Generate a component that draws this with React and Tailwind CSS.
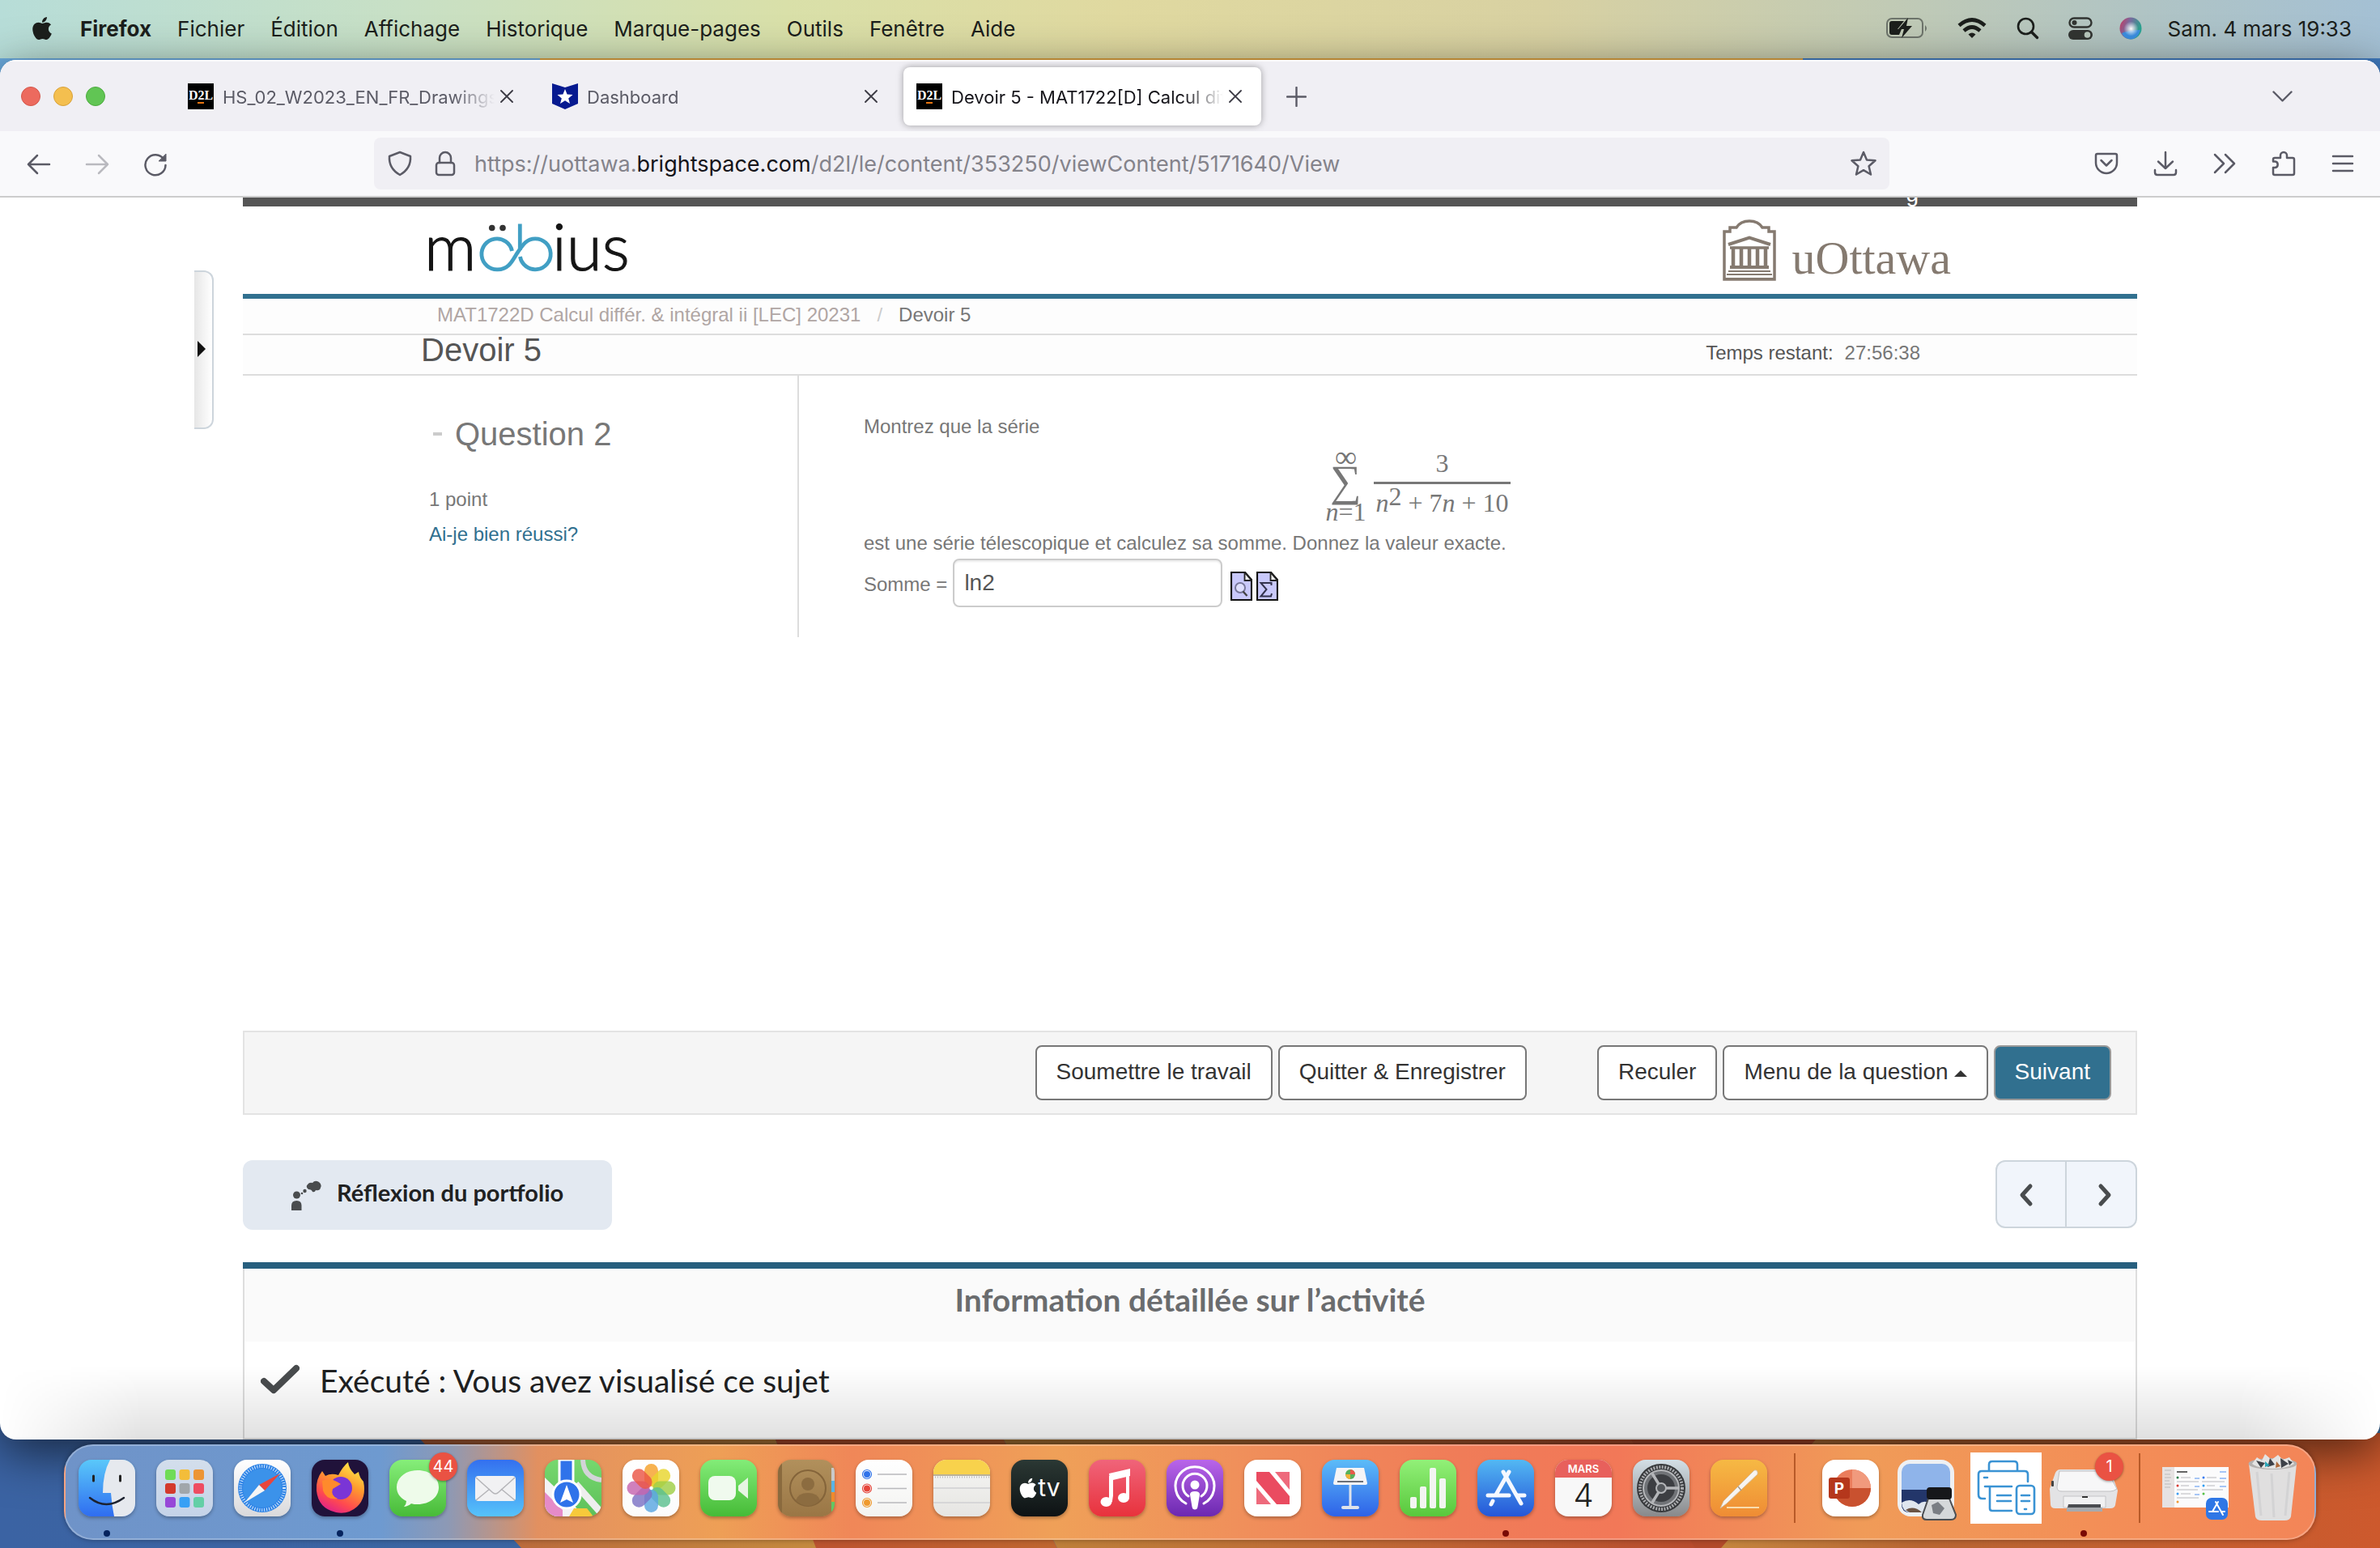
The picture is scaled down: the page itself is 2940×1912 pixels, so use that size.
import { useState } from "react"
import { FaApple } from "react-icons/fa"

const menus = ["Fichier", "Édition", "Affichage", "Historique", "Marque-pages", "Outils", "Fenêtre", "Aide"]

const Wallpaper = () => (
  <svg className="absolute inset-0 w-full h-full" viewBox="0 0 2940 1912" preserveAspectRatio="none" aria-hidden="true">
    <defs>
      <linearGradient id="wpBlue">
        <stop offset="0" stopColor="#3b63a3" />
        <stop offset="1" stopColor="#3d6d9e" />
      </linearGradient>
      <linearGradient id="wpA">
        <stop offset="0" stopColor="#b8603a" />
        <stop offset="1" stopColor="#c48a3e" />
      </linearGradient>
      <linearGradient id="wpB">
        <stop offset="0" stopColor="#bb5030" />
        <stop offset="1" stopColor="#bf6630" />
      </linearGradient>
      <linearGradient id="wpC">
        <stop offset="0" stopColor="#bd833a" />
        <stop offset="0.5" stopColor="#bf6534" />
        <stop offset="1" stopColor="#b4402a" />
      </linearGradient>
      <linearGradient id="wpD">
        <stop offset="0" stopColor="#c4853e" />
        <stop offset="0.3" stopColor="#b86532" />
        <stop offset="1" stopColor="#cd592d" />
      </linearGradient>
    </defs>
    <rect width="2940" height="1912" fill="url(#wpBlue)" />
    <rect width="667" height="110" fill="#6aa9dc" />
    <rect x="667" width="1560" height="110" fill="#dba13f" />
    <rect x="2227" width="713" height="110" fill="#3f79bd" />
    <path d="M512 1770 L644 1912 H1010 L955 1770z" fill="url(#wpA)" />
    <path d="M955 1770 L1008 1912 H1306 L1236 1770z" fill="url(#wpB)" />
    <path d="M1236 1770 L1306 1912 H2126 L2250 1770z" fill="url(#wpC)" />
    <path d="M2010 1770 L2094 1912 H2130 L2250 1770z" fill="#b24a2b" />
    <path d="M2250 1770 L2126 1912 H2940 V1770z" fill="url(#wpD)" />
  </svg>
)

const MenuBar = () => (
  <header className="relative h-[72px] shrink-0 flex items-center pl-[38px] pr-[33px] pb-[2px] text-[26px] text-[#1c1f1c] bg-[linear-gradient(90deg,#b7ddd8_0%,#c8e0c5_17%,#d9e0a9_33%,#e0d9a0_47%,#d8d1a2_65%,#c3cbb3_78%,#b0c4c4_90%,#a4c0d4_100%)]">
    <FaApple className="w-7 h-8 mr-[33px]" />
    <nav className="flex gap-8">
      <button type="button" className="font-bold">Firefox</button>
      {menus.map((m) => (
        <button type="button" key={m}>{m}</button>
      ))}
    </nav>
    <div className="ml-auto flex items-center">
      <svg width="52" height="26" viewBox="0 0 52 26" className="mr-[36px]">
        <rect x="1" y="1" width="44" height="23" rx="6" fill="none" stroke="#6d746b" strokeWidth="2" />
        <path d="M48 9 q4 4 0 8z" fill="#6d746b" />
        <path d="M7 4 H22 L14 14 H19 L16 21 H7 Q4 21 4 18 V7 Q4 4 7 4z" fill="#1c1f1c" />
        <path d="M27 0 L15 14 H22 L19 25 L32 10 H25z" fill="#1c1f1c" />
      </svg>
      <svg width="36" height="26" viewBox="0 0 36 26" className="mr-[37px]" fill="none" stroke="#1c1f1c" strokeWidth="4.6">
        <path d="M2 9.500 Q18 -4.500 34 9.500" />
        <path d="M8 16 Q18 7 28 16" />
        <path d="M18 25 L13.500 20.500 Q18 16.500 22.500 20.500z" fill="#1c1f1c" stroke="none" />
      </svg>
      <svg width="28" height="28" viewBox="0 0 28 28" className="mr-[36px]" fill="none" stroke="#1c1f1c" strokeLinecap="round">
        <circle cx="11.500" cy="11.500" r="9.500" strokeWidth="2.600" />
        <path d="M18.500 18.500 L25.500 25.500" strokeWidth="3.400" />
      </svg>
      <svg width="30" height="28" viewBox="0 0 30 28" className="mr-[33px]">
        <rect x="1.500" y="1.500" width="27" height="11" rx="5.500" fill="none" stroke="#323532" strokeWidth="2.400" />
        <circle cx="7.500" cy="7" r="3" fill="#323532" />
        <rect x="0" y="16" width="30" height="12" rx="6" fill="#323532" />
        <circle cx="23.500" cy="22" r="3.800" fill="#b9c8bd" />
      </svg>
      <svg width="28" height="28" viewBox="0 0 28 28" className="mr-8">
        <defs>
          <linearGradient id="siri" x1="0" y1="0" x2="1" y2="0.400">
            <stop offset="0" stopColor="#d1355c" />
            <stop offset="0.450" stopColor="#7a6a9e" />
            <stop offset="1" stopColor="#27a58f" />
          </linearGradient>
          <radialGradient id="siriGlow">
            <stop offset="0" stopColor="#fff" />
            <stop offset="1" stopColor="#fff" stopOpacity="0" />
          </radialGradient>
        </defs>
        <circle cx="14" cy="14" r="13.500" fill="url(#siri)" />
        <path d="M3 20 Q13 16 26 16 Q23 27 14 27.500 Q6 27 3 20z" fill="#3b8ee0" />
        <circle cx="14.500" cy="14.500" r="9" fill="url(#siriGlow)" />
      </svg>
      <span className="pr-[2px]">Sam. 4 mars 19:33</span>
    </div>
  </header>
)

const D2L = () => (
  <span className="w-8 h-8 shrink-0 bg-black text-white flex flex-col items-center justify-center font-['Liberation_Serif',serif] font-bold text-[16px] leading-4">
    D2L
    <span className="w-2 h-[2px] bg-[#e87511]"></span>
  </span>
)

const Shield = () => (
  <svg width="32" height="32" viewBox="0 0 32 32" className="shrink-0">
    <path d="M0 0 L16 5 L32 0 V25 L16 32 L0 25z" fill="#071a90" />
    <path d="M16 7 L18.600 13.600 L25.500 14 L20.200 18.400 L22 25 L16 21.300 L10 25 L11.800 18.400 L6.500 14 L13.400 13.600z" fill="#fff" />
  </svg>
)

const Tab = ({ icon, title, active }) => (
  <div className={active ? "w-[442px] h-[72px] px-4 flex items-center rounded-lg bg-white text-[#15141a] shadow-[0_0_8px_rgba(0,0,0,0.35)]" : "w-[442px] h-[72px] px-4 flex items-center rounded-lg text-[#5b5b66]"}>
    {icon}
    <span className="ml-[11px] pt-[3px] flex-1 overflow-hidden whitespace-nowrap text-[22px] [mask-image:linear-gradient(to_right,black_calc(100%-50px),transparent)]">
      {title}
    </span>
    <button type="button" aria-label="Fermer l’onglet" className="ml-[7px] mr-2 w-4 h-4">
      <svg width="16" height="16" viewBox="0 0 16 16" stroke="#3b3a44" strokeWidth="1.800" strokeLinecap="round">
        <path d="M1 1 L15 15 M15 1 L1 15" />
      </svg>
    </button>
  </div>
)

const TabStrip = () => (
  <div className="h-[88px] shrink-0 bg-[#f0eff4] border-t-2 border-white/70 flex items-center pl-[26px] pr-[108px]">
    <div className="flex gap-4 mr-[86px]">
      <span className="w-6 h-6 rounded-full bg-[#ec6a5e] border border-[#d4574b]"></span>
      <span className="w-6 h-6 rounded-full bg-[#f4bf4f] border border-[#d8a13a]"></span>
      <span className="w-6 h-6 rounded-full bg-[#61c554] border border-[#4dab3f]"></span>
    </div>
    <div className="flex gap-2">
      <Tab icon={<D2L />} title="HS_02_W2023_EN_FR_Drawings" />
      <Tab icon={<Shield />} title="Dashboard" />
      <Tab icon={<D2L />} title="Devoir 5 - MAT1722[D] Calcul différ" active />
    </div>
    <button type="button" aria-label="Nouvel onglet" className="ml-[31px]">
      <svg width="25" height="25" viewBox="0 0 25 25" stroke="#5b5b66" strokeWidth="2.400" strokeLinecap="round">
        <path d="M12.500 1 V24 M1 12.500 H24" />
      </svg>
    </button>
    <button type="button" aria-label="Lister les onglets" className="ml-auto">
      <svg width="25" height="14" viewBox="0 0 25 14" fill="none" stroke="#5b5b66" strokeWidth="2.400" strokeLinecap="round" strokeLinejoin="round">
        <path d="M1.500 1.500 L12.500 12.500 L23.500 1.500" />
      </svg>
    </button>
  </div>
)

const NavIcon = ({ label, children, faded }) => (
  <button type="button" aria-label={label} className={faded ? "w-8 h-8 opacity-40" : "w-8 h-8"}>
    <svg width="32" height="32" viewBox="0 0 32 32" fill="none" stroke="#5b5b66" strokeWidth="2.500" strokeLinecap="round" strokeLinejoin="round">
      {children}
    </svg>
  </button>
)

const NavBar = () => (
  <div className="h-[82px] shrink-0 bg-[#f9f9fb] border-b-2 border-[#cccccc] flex items-center pl-8 pr-[30px]">
    <div className="flex gap-10 mr-[254px]">
      <NavIcon label="Reculer d’une page"><path d="M29 17 H3 M14 6 L3 17 L14 28" /></NavIcon>
      <NavIcon label="Avancer d’une page" faded><path d="M3 17 H29 M18 6 L29 17 L18 28" /></NavIcon>
      <NavIcon label="Actualiser">
        <path d="M26.500 11 A12.500 12.500 0 1 0 28.500 18" />
        <path d="M29 4.500 V13 H20.500z" fill="#5b5b66" strokeWidth="1" />
      </NavIcon>
    </div>
    <div className="flex-1 h-16 rounded-lg bg-[#f0eff4] flex items-center gap-6 px-4">
      <NavIcon label="Protection">
        <path d="M16 2 L29 7 Q30 22 16 30 Q2 22 3 7z" />
      </NavIcon>
      <NavIcon label="Sécurité">
        <rect x="5" y="15" width="22" height="15" rx="3" />
        <path d="M9 15 V9 A7 7 0 0 1 23 9 V15" />
      </NavIcon>
      <div className="flex-1 pt-[2px] text-[27px] text-[#84838b] whitespace-nowrap -ml-1">
        https://uottawa.<span className="text-[#15141a]">brightspace.com</span>/d2l/le/content/353250/viewContent/5171640/View
      </div>
      <NavIcon label="Marquer cette page">
        <path d="M16 2 L20 11.500 L30.500 12.300 L22.600 19.300 L25 29.500 L16 24.200 L7 29.500 L9.400 19.300 L1.500 12.300 L12 11.500z" />
      </NavIcon>
    </div>
    <div className="flex gap-[41px] ml-[252px]">
      <NavIcon label="Pocket">
        <path d="M5 4 H27 Q29 4 29 6 V15 A13 13 0 0 1 3 15 V6 Q3 4 5 4z M9.500 12 L16 18.500 L22.500 12" />
      </NavIcon>
      <NavIcon label="Téléchargements">
        <path d="M16 2 V22 M7 13.500 L16 22 L25 13.500 M3 24 V27 Q3 30 6 30 H26 Q29 30 29 27 V24" />
      </NavIcon>
      <NavIcon label="Autres outils">
        <path d="M4 5 L15 16 L4 27 M17 5 L28 16 L17 27" />
      </NavIcon>
      <NavIcon label="Extensions">
        <path d="M5 30 Q3 30 3 28 V21 H5.500 A3.800 3.800 0 0 0 5.500 13.500 H3 V11 Q3 9 5 9 H12 V6 A4 4 0 0 1 20 6 V9 H27 Q29 9 29 11 V28 Q29 30 27 30z" />
      </NavIcon>
      <NavIcon label="Menu">
        <path d="M4 7 H28 M4 16 H28 M4 25 H28" />
      </NavIcon>
    </div>
  </div>
)

const Mobius = () => (
  <svg width="250" height="72" viewBox="0 0 250 72" className="font-['Lato',sans-serif] font-light" role="img" aria-label="möbius">
    <text x="-5" y="61" fontSize="80" fill="#151515" stroke="#151515" strokeWidth="1.200">m</text>
    <g fill="none" stroke="#419fc4" strokeWidth="4.800">
      <path d="M103.500 37 A19 19 0 1 0 86 59.800 C101 59.800 105 46 111 38 C117 29 122 21.800 132 21.800 A19 19 0 1 1 113.500 44" />
      <path d="M113.300 3.500 V36" />
    </g>
    <circle cx="78.700" cy="8.500" r="3.800" fill="#333" />
    <circle cx="92" cy="8.500" r="3.800" fill="#333" />
    <text x="153" y="61" fontSize="80" fill="#151515" stroke="#151515" strokeWidth="1.200">ius</text>
  </svg>
)

const UOttawa = () => (
  <div className="flex items-center gap-5 text-[#857a70]">
    <svg width="66" height="76" viewBox="0 0 66 76" fill="none" stroke="currentColor">
      <path d="M2 74 V15 H9 V10 H17 Q22 2 33 2 Q44 2 49 10 H57 V15 H64 V74z" strokeWidth="3.500" />
      <path d="M7 31 L33 22.500 L59 31" strokeWidth="4" />
      <path d="M9 35 H57" strokeWidth="3.500" />
      <path d="M13 35 V58 M23 35 V58 M33 35 V58 M43 35 V58 M53 35 V58" strokeWidth="4.500" />
      <path d="M9 59 H57" strokeWidth="4" />
      <path d="M7 64 H59 M5 68 H61 M2 73 H64" strokeWidth="2" />
    </svg>
    <span className="font-['Liberation_Serif',serif] text-[58px] leading-[60px] pt-5">uOttawa</span>
  </div>
)

const Formula = () => (
  <div className="h-[110px] flex justify-center items-center gap-[10px] font-['Liberation_Serif',serif] text-[32px] text-[#777]">
    <div className="flex flex-col items-center">
      <span className="h-[20px] leading-[20px] text-[38px]">∞</span>
      <span className="h-[44px] leading-[40px] text-[54px]">∑</span>
      <span className="h-[26px] leading-[28px]"><i>n</i>=1</span>
    </div>
    <div className="flex flex-col items-center">
      <span className="leading-[36px] pb-[5px]">3</span>
      <span className="w-full h-[3px] bg-[#777]"></span>
      <span className="leading-[46px] px-[2px] whitespace-nowrap">
        <i>n</i><sup className="text-[32px] leading-[0px] top-[-8px]">2</sup> + 7<i>n</i> + 10
      </span>
    </div>
  </div>
)

const DocIcon = ({ children, label }) => (
  <button type="button" aria-label={label}>
    <svg width="27" height="36" viewBox="0 0 27 36">
      <path d="M1 1 H18 L26 10 V35 H1z" fill="#c9c9fb" stroke="#111" strokeWidth="2.200" />
      <path d="M17.500 1 V11 H26z" fill="#eee" stroke="#222" strokeWidth="1.800" />
      {children}
    </svg>
  </button>
)

const Question = () => {
  const [answer, setAnswer] = useState("ln2")
  return (
    <section className="flex-1 flex items-start text-2xl text-[#777]">
      <div className="w-[687px] h-[323px] shrink-0 border-r-2 border-[#dddddd] pl-[230px] pt-[52px]">
        <h2 className="flex items-center text-[40px] leading-10">
          <span className="w-[11px] h-1 ml-[5px] mr-4 bg-[#cccccc]"></span>
          Question 2
        </h2>
        <p className="mt-[39px] leading-[43px]">1 point</p>
        <a href="#reussi" className="block leading-[43px] text-[#31708f]">Ai-je bien réussi?</a>
      </div>
      <div className="flex-1 pl-[80px] pr-[204px] pt-[46px]">
        <p className="leading-[34px]">Montrez que la série</p>
        <Formula />
        <p className="leading-[34px]">est une série télescopique et calculez sa somme. Donnez la valeur exacte.</p>
        <div className="mt-[2px] flex items-center">
          <label htmlFor="somme" className="pt-[3px]">Somme =</label>
          <input
            id="somme"
            className="ml-[7px] w-[333px] h-[60px] px-3 border-2 border-[#cccccc] rounded-lg bg-white text-[28px] text-[#555] shadow-[inset_0_2px_2px_rgba(0,0,0,0.08)]"
            value={answer}
            onChange={(e) => setAnswer(e.target.value)}
          />
          <div className="flex gap-[5px] ml-[10px] pt-2">
            <DocIcon label="Aperçu">
              <circle cx="12" cy="20" r="6" fill="#dfe0ff" stroke="#77779a" strokeWidth="2" />
              <path d="M15.500 24.500 L20.500 30" stroke="#444" strokeWidth="2.400" />
            </DocIcon>
            <DocIcon label="Éditeur d’équation">
              <path d="M18.500 17 V14 H5.500 L12.500 22 L5.500 30.500 H18 L19 27" fill="none" stroke="#33334d" strokeWidth="2" />
            </DocIcon>
          </div>
        </div>
      </div>
    </section>
  )
}

const ActionButton = ({ children, primary }) => (
  <button
    type="button"
    className={
      primary
        ? "h-[68px] px-6 pb-[3px] border-2 border-[#999] rounded-lg bg-[#31708f] text-white"
        : "h-[68px] px-6 pb-[3px] border-2 border-[#777] rounded-lg bg-white text-[#333] flex items-center gap-[7px]"
    }
  >
    {children}
  </button>
)

const Assignment = () => (
  <div className="flex-1 flex flex-col font-['Liberation_Sans',Arial,sans-serif]">
    <div className="h-[11px] bg-[#555555] text-white text-[28px] overflow-hidden flex justify-end items-end pr-[270px] pb-[7px]">
      <span className="leading-[16px]">g</span>
    </div>
    <div className="h-[114px] border-b-6 border-[#31708f] flex justify-between items-center pl-[229px] pr-[230px]">
      <Mobius />
      <UOttawa />
    </div>
    <div className="h-[45px] pb-1 bg-[#fdfdfd] border-b-2 border-[#dddddd] flex items-center pl-[240px] text-2xl">
      <a href="#cours" className="text-[#b0a6a4]">MAT1722D Calcul différ. &amp; intégral ii [LEC] 20231</a>
      <span className="mx-[20px] text-[#cccccc]">/</span>
      <span className="text-[#777]">Devoir 5</span>
    </div>
    <div className="h-[50px] bg-[#fdfdfd] border-b-2 border-[#dddddd] flex items-center justify-between pl-[220px] pr-[268px] text-[#555]">
      <h1 className="text-[40px] leading-9 pb-3">Devoir 5</h1>
      <p className="text-2xl pb-1">
        Temps restant:<span className="ml-[14px] text-[#777]">27:56:38</span>
      </p>
    </div>
    <Question />
    <div className="h-[104px] bg-[#f5f5f5] border-2 border-[#e3e3e3] flex items-center justify-end gap-[7px] pr-[30px] text-[28px]">
      <ActionButton>Soumettre le travail</ActionButton>
      <ActionButton>Quitter &amp; Enregistrer</ActionButton>
      <span className="w-[73px]"></span>
      <ActionButton>Reculer</ActionButton>
      <ActionButton>
        Menu de la question
        <svg width="16" height="8" viewBox="0 0 16 8" className="mt-1"><path d="M0 8 L8 0 L16 8z" fill="#333" /></svg>
      </ActionButton>
      <ActionButton primary>Suivant</ActionButton>
    </div>
  </div>
)

const PageButtons = () => (
  <div className="mt-14 mb-10 flex justify-between">
    <button type="button" className="h-[86px] px-[60px] pb-[6px] rounded-xl bg-[#e3e9f1] flex items-center gap-[19px] font-bold text-[29px] text-[#202122]">
      <svg width="37" height="38" viewBox="0 0 37 38" fill="#494c4e" className="mt-[8px]">
        <circle cx="6.500" cy="18" r="4.500" />
        <path d="M0 37 V31 Q0 25 6.500 25 Q12.500 25 12.500 31 V37z" />
        <circle cx="13" cy="16" r="1.300" />
        <circle cx="16.500" cy="13" r="2.200" />
        <path d="M21 11 Q17 8 20 5 Q22 2 26 3 Q29 -1 34 2 Q38 5 36 9 Q35 13 30 12 Q29 15 26 14 Q25 11 21 11z" />
      </svg>
      Réflexion du portfolio
    </button>
    <div className="h-[84px] flex rounded-xl border-2 border-[#cdd5dc] bg-[#f1f5fb] divide-x-2 divide-[#cdd5dc]">
      <button type="button" aria-label="Précédent" className="w-[86px] flex items-center justify-center pt-[2px] pr-[12px]">
        <svg width="18" height="30" viewBox="0 0 18 30" fill="none" stroke="#494c4e" strokeWidth="5" strokeLinecap="round" strokeLinejoin="round">
          <path d="M14 4 L4 15 L14 26" />
        </svg>
      </button>
      <button type="button" aria-label="Suivant" className="w-[85px] flex items-center justify-center pt-[2px] pl-[8px]">
        <svg width="18" height="30" viewBox="0 0 18 30" fill="none" stroke="#494c4e" strokeWidth="5" strokeLinecap="round" strokeLinejoin="round">
          <path d="M4 4 L14 15 L4 26" />
        </svg>
      </button>
    </div>
  </div>
)

const Activity = () => (
  <section className="border-t-8 border-[#275f7e]">
    <div className="border-x-2 border-b-2 border-[#dddddd]">
      <h2 className="h-[90px] pb-[14px] bg-[#fafafa] flex items-center justify-center text-[39px] font-bold text-[#6a6c6e]">
        Information détaillée sur l’activité
      </h2>
      <p className="h-[119px] pt-[28px] pl-5 flex items-start gap-[25px] text-[39px] leading-10 text-[#202122]">
        <svg width="48" height="38" viewBox="0 0 48 38" fill="none" stroke="#494c4e" strokeWidth="8" strokeLinecap="round" strokeLinejoin="round">
          <path d="M4 21 L16 32 L44 5" />
        </svg>
        Exécuté : Vous avez visualisé ce sujet
      </p>
    </div>
  </section>
)

const Browser = () => (
  <div className="relative mt-[2px] flex-1 flex flex-col rounded-[20px] overflow-hidden bg-white shadow-[0_16px_60px_rgba(0,0,0,0.6)]">
    <TabStrip />
    <NavBar />
    <main className="flex-1 flex font-['Lato',sans-serif]">
      <aside className="w-[300px] pt-[90px] pl-[240px]">
        <button type="button" aria-label="Ouvrir le panneau" className="w-6 h-[196px] pl-1 pb-[3px] flex items-center border-2 border-l-0 border-[#cdd5dc] rounded-r-xl bg-[linear-gradient(90deg,#e6e6e6,#ffffff)]">
          <svg width="10" height="20" viewBox="0 0 10 20"><path d="M0 0 L10 10 L0 20z" fill="#111" /></svg>
        </button>
      </aside>
      <div className="flex-1 flex flex-col mr-[300px]">
        <Assignment />
        <PageButtons />
        <Activity />
      </div>
    </main>
    <div className="absolute inset-x-0 bottom-0 h-[90px] bg-[linear-gradient(180deg,transparent,rgba(0,0,0,0.12))] pointer-events-none [mask-image:linear-gradient(90deg,transparent_0,black_6%,black_94%,transparent)]"></div>
  </div>
)

/* ---- dock ---- */

const Grad = ({ id, from, to }) => (
  <linearGradient id={id} x1="0" y1="0" x2="0" y2="1">
    <stop offset="0" stopColor={from} />
    <stop offset="1" stopColor={to} />
  </linearGradient>
)

const Tile = ({ id, from, to, children }) => (
  <svg width="70" height="70" viewBox="0 0 70 70" className="rounded-2xl shadow-[0_2px_4px_rgba(0,0,0,0.3)]">
    <defs><Grad id={id} from={from} to={to} /></defs>
    <rect width="70" height="70" fill={`url(#${id})`} />
    {children}
  </svg>
)

const Finder = () => (
  <Tile id="gFinder" from="#5ac8fa" to="#2f6df0">
    <path d="M39 0 H70 V70 H44 Q41 56 40 41 H30 Q30 16 39 0z" fill="#e6e9ee" />
    <path d="M18.500 20 V26 M51.500 20 V26" stroke="#222" strokeWidth="3" strokeLinecap="round" />
    <path d="M14 47 Q34 63 56 47" fill="none" stroke="#1c2230" strokeWidth="2.500" strokeLinecap="round" />
  </Tile>
)

const launchColors = ["#6fdc57", "#f3bd3a", "#ec9535", "#d33a2c", "#a0a6ab", "#ee4d62", "#9748d8", "#38a0f5", "#63cfa6"]

const Launchpad = () => (
  <Tile id="gLaunch" from="#d3deec" to="#c5d3e8">
    {launchColors.map((c, i) => (
      <rect key={c} x={11 + (i % 3) * 17.5} y={12 + Math.floor(i / 3) * 17} width="13" height="13" rx="3" fill={c} />
    ))}
  </Tile>
)

const Safari = () => (
  <Tile id="gSafari" from="#ffffff" to="#d9d9db">
    <circle cx="35" cy="35" r="30" fill="#2f84e6" />
    <circle cx="35" cy="35" r="27" fill="none" stroke="#cfe6ff" strokeWidth="4" strokeDasharray="1 2" />
    <circle cx="35" cy="35" r="24" fill="#3b92ea" />
    <path d="M57 17 L38 38 L31 31z" fill="#e8453c" />
    <path d="M13 53 L31 31 L38 38z" fill="#f5f5f5" />
  </Tile>
)

const Firefox = () => (
  <Tile id="gFirefox" from="#20123a" to="#20123a">
    <defs>
      <linearGradient id="fox" x1="0.8" y1="0" x2="0.3" y2="1">
        <stop offset="0" stopColor="#fff04a" />
        <stop offset="0.4" stopColor="#ff9a2e" />
        <stop offset="0.75" stopColor="#ff4a4f" />
        <stop offset="1" stopColor="#e0218a" />
      </linearGradient>
    </defs>
    <path d="M45 3 Q46 11 53 18 L58 15 Q59 22 64 27 Q68 47 56 58 Q45 68 30 65 Q8 60 6 38 Q5 24 13 14 L17 20 Q24 16 33 19 Q38 9 45 3z" fill="url(#fox)" />
    <circle cx="36" cy="35" r="14" fill="#7a35d6" />
    <path d="M13 26 Q23 22 31 27 L36 30 L26 36 Q23 44 32 48 Q18 50 14 38z" fill="#ff8a2c" />
  </Tile>
)

const Messages = () => (
  <Tile id="gMsg" from="#86ee7a" to="#48bb38">
    <path d="M35 13 C50 13 61 22 61 34 C61 46 50 55 35 55 C32 55 29 55 27 54 Q24 57 18 58 Q21 55 21 51 C13 47 9 41 9 34 C9 22 20 13 35 13z" fill="#eefbea" />
  </Tile>
)

const Mail = () => (
  <Tile id="gMail" from="#3470ef" to="#56c3fa">
    <rect x="10" y="20" width="50" height="31" rx="4" fill="#f1f1f3" />
    <path d="M11 22 L31 40 Q35 44 39 40 L59 22 M11 50 L28 36 M59 50 L42 36" fill="none" stroke="#b4b4b8" strokeWidth="1.5" />
  </Tile>
)

const Maps = () => (
  <Tile id="gMaps" from="#76d86e" to="#5dc05a">
    <path d="M0 22 L50 70 H0z" fill="#f3f3f5" />
    <path d="M0 40 L22 62 V70 H0z" fill="#e58bc8" />
    <path d="M30 70 L36 60 H52 L60 70z" fill="#f7c93b" />
    <path d="M18 0 V45 H35 V0z" fill="#2f73ea" stroke="#fff" strokeWidth="3" />
    <path d="M38 30 L70 66" stroke="#eee" strokeWidth="9" />
    <path d="M47 0 Q48 22 70 25" fill="none" stroke="#d2d4d8" strokeWidth="6" />
    <circle cx="27" cy="43" r="17" fill="#2f73ea" stroke="#fff" strokeWidth="3" />
    <path d="M27 31 L35 53 L27 49 L19 53z" fill="#fff" />
  </Tile>
)

const petals = ["#f5a12b", "#e8d62d", "#9fce46", "#5cbf8f", "#5aa6e0", "#7b72c4", "#c664ae", "#ea5545"]

const Photos = () => (
  <Tile id="gPhotos" from="#ffffff" to="#fbfbfb">
    {petals.map((c, i) => (
      <rect key={c} x="27" y="5" width="17" height="28" rx="8.500" fill={c} fillOpacity="0.82" transform={`rotate(${i * 45} 35.5 35)`} />
    ))}
  </Tile>
)

const FaceTime = () => (
  <Tile id="gFace" from="#83ec78" to="#46bb37">
    <rect x="10" y="20" width="34" height="30" rx="8" fill="#f0faee" />
    <path d="M47 32 L59 22 V48 L47 38z" fill="#e6f5e3" />
  </Tile>
)

const Contacts = () => (
  <Tile id="gContacts" from="#b1905c" to="#9a7645">
    <rect x="66" y="10" width="4" height="16" fill="#c9c9c9" />
    <rect x="66" y="26" width="4" height="14" fill="#58b4e6" />
    <rect x="66" y="40" width="4" height="12" fill="#f08a2c" />
    <rect x="66" y="52" width="4" height="12" fill="#62c763" />
    <rect width="5" height="70" fill="#8a6a3e" />
    <circle cx="37" cy="35" r="22" fill="none" stroke="#84643a" strokeWidth="2" />
    <circle cx="37" cy="30" r="8" fill="#8c6c40" />
    <path d="M22 50 Q25 41 37 41 Q49 41 52 50 Q45 57 37 57 Q29 57 22 50z" fill="#8c6c40" />
  </Tile>
)

const Reminders = () => (
  <Tile id="gRem" from="#ffffff" to="#f3f3f1">
    {["#2f73ea", "#e6453a", "#ef9a2e"].map((c, i) => (
      <g key={c}>
        <circle cx="14" cy={18 + i * 17.5} r="5.500" fill="none" stroke={c} strokeWidth="1.200" />
        <circle cx="14" cy={18 + i * 17.5} r="4" fill={c} />
        <path d={`M27 ${18 + i * 17.5} H63`} stroke="#b9b9bc" strokeWidth="1.600" />
      </g>
    ))}
  </Tile>
)

const Notes = () => (
  <Tile id="gNotes" from="#f6f6f4" to="#e6e5e2">
    <rect width="70" height="18" fill="#f8d24c" />
    <path d="M0 19 H70" stroke="#a79d7c" strokeWidth="1.500" />
    <path d="M2 21.500 H70" stroke="#bbb" strokeWidth="2" strokeDasharray="1 2" />
    <path d="M0 35 H70 M0 53 H70" stroke="#cfcfd2" strokeWidth="1.500" />
  </Tile>
)

const AppleTv = () => (
  <div className="w-[70px] h-[70px] rounded-2xl bg-[linear-gradient(180deg,#2b3834,#0d1214)] text-white flex items-center justify-center shadow-[0_2px_4px_rgba(0,0,0,0.3)]">
    <FaApple className="w-6 h-7" />
    <span className="text-[30px] leading-8 pb-[2px]">tv</span>
  </div>
)

const Music = () => (
  <Tile id="gMusic" from="#f0647a" to="#e8323c">
    <path d="M25 17 L51 11 V20 L30 25 V51" fill="#fff" />
    <path d="M27 52 V20 M48 46 V14" stroke="#fff" strokeWidth="4" />
    <ellipse cx="21.500" cy="52" rx="7" ry="6" fill="#fff" />
    <ellipse cx="43" cy="47" rx="7" ry="6" fill="#fff" />
  </Tile>
)

const Podcasts = () => (
  <Tile id="gPod" from="#b965ea" to="#6c28b0">
    <g fill="none" stroke="#fff" strokeWidth="3" strokeLinecap="round">
      <path d="M24 54 A24 24 0 1 1 46 54" />
      <path d="M27 45 A15 15 0 1 1 43 45" />
    </g>
    <circle cx="35" cy="31" r="5.500" fill="#fff" />
    <path d="M35 39 Q41 39 41 43 L38.500 58 Q38 61.500 35 61.500 Q32 61.500 31.500 58 L29 43 Q29 39 35 39z" fill="#fff" />
  </Tile>
)

const News = () => (
  <Tile id="gNews" from="#ffffff" to="#ffffff">
    <path d="M15 15 H31 L56 45 V55 H40 L15 26z" fill="#ea4b60" />
    <path d="M38 15 H56 V37z M15 34 V55 H33z" fill="#ee6a7c" />
  </Tile>
)

const Keynote = () => (
  <Tile id="gKey" from="#5cbcf8" to="#2e62e8">
    <path d="M18 10 H52 L56 29 Q56 31 54 31 H16 Q14 31 14 29z" fill="#f4f4f6" />
    <circle cx="35" cy="18" r="6" fill="#58b05a" />
    <path d="M35 18 V12 A6 6 0 0 1 41 18z" fill="#e85a4a" />
    <path d="M35 18 H29 A6 6 0 0 0 35 24z" fill="#f0b23a" />
    <path d="M19 27 H51" stroke="#6b7077" strokeWidth="2" />
    <path d="M35 31 V58" stroke="#dfe3ea" strokeWidth="3" />
    <rect x="24" y="57" width="22" height="4" rx="2" fill="#dfe3ea" />
  </Tile>
)

const Numbers = () => (
  <Tile id="gNum" from="#92f078" to="#58c83c">
    <rect x="13" y="46" width="8" height="14" rx="2" fill="#f2f5f1" />
    <rect x="25" y="33" width="8" height="27" rx="2" fill="#f2f5f1" />
    <rect x="37" y="10" width="8" height="50" rx="2" fill="#f2f5f1" />
    <rect x="49" y="23" width="8" height="37" rx="2" fill="#f2f5f1" />
  </Tile>
)

const AppStore = () => (
  <Tile id="gStore" from="#53b8f3" to="#2556d8">
    <g stroke="#f5f8ff" strokeWidth="5" strokeLinecap="round">
      <path d="M32 15 L54 54 M39 15 L23 43 M13 44 H39 M50 44 H58 M19 51 L17 55" />
    </g>
  </Tile>
)

const Calendar = () => (
  <div className="w-[70px] h-[70px] rounded-2xl overflow-hidden bg-[#f8f8f8] text-center shadow-[0_2px_4px_rgba(0,0,0,0.3)]">
    <div className="h-[22px] bg-[#e8605c] text-white text-[13px] leading-[23px] font-semibold">MARS</div>
    <div className="text-[40px] leading-[44px] font-light text-[#222]">4</div>
  </div>
)

const Settings = () => (
  <Tile id="gSet" from="#d3dfe6" to="#88898b">
    <circle cx="35" cy="35" r="30" fill="#36383b" />
    <circle cx="35" cy="35" r="26" fill="none" stroke="#a9abae" strokeWidth="4" strokeDasharray="2 1.500" />
    <circle cx="35" cy="35" r="22" fill="#707377" stroke="#b4b6b9" strokeWidth="2" />
    <circle cx="35" cy="35" r="17" fill="#3c3e42" />
    <path d="M35 35 H56 M35 35 L24 17 M35 35 L24 53" stroke="#b4b6b9" strokeWidth="3.500" />
    <circle cx="35" cy="35" r="6" fill="#55585c" stroke="#b4b6b9" strokeWidth="2" />
  </Tile>
)

const Pages = () => (
  <Tile id="gPages" from="#f6b944" to="#ef8c34">
    <path d="M54 13 Q59 12 58 18 L20 54 L12 60 L16 51z" fill="#f7f4f0" stroke="#cbb79b" strokeWidth="0.800" />
    <path d="M34 33 L38 38" stroke="#a59a8c" strokeWidth="1.500" />
    <path d="M20 59 H60" stroke="#f9dcae" strokeWidth="2" />
  </Tile>
)

const PowerPoint = () => (
  <Tile id="gPpt" from="#ffffff" to="#ffffff">
    <circle cx="37" cy="35" r="23" fill="#ea7d5c" />
    <path d="M37 35 H60 A23 23 0 0 1 14 35z" fill="#c9512f" />
    <path d="M37 12 A23 23 0 0 1 60 35 H37z" fill="#f19a7d" />
    <rect x="8" y="22" width="26" height="26" rx="3" fill="#b5371c" />
    <text x="21" y="42" textAnchor="middle" fontSize="19" fontWeight="bold" fill="#fff">P</text>
  </Tile>
)

const Preview = () => (
  <svg width="76" height="78" viewBox="0 0 76 78" className="shrink-0 mt-2">
    <rect width="70" height="70" rx="16" fill="#eef0f3" />
    <rect x="5" y="5" width="60" height="60" rx="10" fill="#8fb4ea" />
    <path d="M5 37 H65 V55 Q65 65 55 65 H15 Q5 65 5 55z" fill="#23366a" />
    <path d="M5 53 Q16 46 26 55 Q34 48 42 56 L40 65 H15 Q6 64 5 53z" fill="#dfe6ee" />
    <path d="M10 62 Q20 56 30 65 H15z" fill="#6b5444" />
    <path d="M38 48 H64 L72 68 Q72 74 66 74 H36 Q30 74 31 68z" fill="#d5d8da" stroke="#4b4e52" strokeWidth="2" />
    <path d="M42 56 L50 52 L58 60 L52 68 L44 66z" fill="#7a7e84" />
    <rect x="36" y="34" width="31" height="15" rx="4" fill="#16171a" />
  </svg>
)

const HpSmart = () => (
  <svg width="88" height="88" viewBox="0 0 88 88" className="shrink-0">
    <rect width="88" height="88" fill="#fff" />
    <g fill="none" stroke="#3a93d4" strokeWidth="2.600" strokeLinecap="round" strokeLinejoin="round">
      <path d="M23 22 V15 Q23 11 27 11 H54 Q58 11 58 15 V22" />
      <path d="M18 57 H15 Q10 57 10 52 V27 Q10 23 14 23 H67 Q71 23 71 27 V36" />
      <path d="M17 31 H21 M18 42 H51 M24 42 V69 Q24 72 27 72 H51" />
      <path d="M33 53 H50 M33 60 H50" />
      <rect x="57" y="41" width="22" height="35" rx="4" />
      <path d="M63 53 H73 M63 60 H73 M67 70 H69" />
    </g>
  </svg>
)

const Printer = () => (
  <svg width="86" height="54" viewBox="0 0 86 54" className="shrink-0 mt-2">
    <path d="M8 4 Q10 0 14 0 H70 Q75 0 77 4 L85 26 L82 44 Q81 48 76 48 H8 Q2 48 2 43 L1 24z" fill="#e3e3e5" />
    <path d="M13 2 H72 L84 24 Q80 27 76 27 H16 Q10 27 10 22z" fill="#f7f7f8" stroke="#bfc0c3" />
    <path d="M18 33 H70 V47 H18z" fill="#f1f1f2" stroke="#c4c4c7" />
    <path d="M24 43 H64 V51 H22z" fill="#4a4c50" />
    <path d="M22 47 H66 V52 H22z" fill="#a8aaad" />
    <rect x="41" y="33" width="7" height="2" fill="#333" />
    <rect x="3" y="14" width="3" height="7" rx="1" fill="#444" />
  </svg>
)

const MiniWindow = () => (
  <svg width="84" height="72" viewBox="0 0 84 72" className="shrink-0 mt-5">
    <rect x="1" width="82" height="50" fill="#fbfbfc" />
    <rect x="1" width="15" height="50" fill="#e6e2e2" />
    <path d="M4 4 H12 M4 9 H11 M4 13 H12 M4 17 H10 M4 21 H12 M4 25 H11" stroke="#bbb" />
    <path d="M19 6 H32" stroke="#333" strokeWidth="1.500" />
    <path d="M72 6 H80 M41 14 H47 M72 14 H80 M41 24 H47 M72 24 H80 M41 34 H47" stroke="#8ab4f2" strokeWidth="1.500" />
    <path d="M24 13 H36 M56 13 H68 M19 18 H46 M50 18 H78 M24 23 H34 M56 23 H66 M19 28 H45 M50 28 H76 M24 33 H36 M19 38 H46" stroke="#b8b8bd" />
    <circle cx="20" cy="13" r="1.500" fill="#2d7d4a" />
    <circle cx="52" cy="13" r="1.500" fill="#3d7ef0" />
    <circle cx="20" cy="23" r="1.500" fill="#d83c34" />
    <circle cx="52" cy="23" r="1.500" fill="#2f9df2" />
    <circle cx="20" cy="33" r="1.500" fill="#3d9df2" />
    <circle cx="52" cy="33" r="1.500" fill="#58c048" />
    <circle cx="20" cy="43" r="1.500" fill="#f09a34" />
    <rect x="55" y="38" width="27" height="27" rx="7" fill="#2f77e6" />
    <path d="M67 43 L76 59 M70 43 L63 55 M59 55 H70 M75 55 H78" stroke="#fff" strokeWidth="2" strokeLinecap="round" />
  </svg>
)

const Trash = () => (
  <svg width="64" height="84" viewBox="0 0 64 84" className="shrink-0">
    <path d="M2 12 L61 12 L54 77 Q53 82 46 82 H18 Q11 82 10 77z" fill="#e0dfdf" />
    <path d="M12 22 L17 76 M52 22 L47 76 M30 24 L33 78" stroke="#d3d3d4" strokeWidth="3" />
    <ellipse cx="31.500" cy="12" rx="30" ry="7" fill="#b5b2b0" />
    <path d="M6 12 L12 4 L18 8 L22 0 L30 7 L38 1 L44 7 L52 4 L58 12 Q48 18 32 18 Q14 18 6 12z" fill="#e4e4e3" />
    <path d="M11 8 L22 11 L17 17z M28 5 L34 13 L25 16z M41 5 L51 12 L42 17z M50 7 L56 10 L52 14z" fill="#3d4148" />
    <path d="M22 9 L28 14 L22 16z" fill="#2aa6b8" />
    <path d="M36 9 L41 15 L35 17z" fill="#b06a3a" />
  </svg>
)

const apps = [
  { name: "Finder", Icon: Finder, dot: "bg-[#06245f]" },
  { name: "Launchpad", Icon: Launchpad },
  { name: "Safari", Icon: Safari },
  { name: "Firefox", Icon: Firefox, dot: "bg-[#06245f]" },
  { name: "Messages", Icon: Messages, badge: "44" },
  { name: "Mail", Icon: Mail },
  { name: "Plans", Icon: Maps },
  { name: "Photos", Icon: Photos },
  { name: "FaceTime", Icon: FaceTime },
  { name: "Contacts", Icon: Contacts },
  { name: "Rappels", Icon: Reminders },
  { name: "Notes", Icon: Notes },
  { name: "Apple TV", Icon: AppleTv },
  { name: "Musique", Icon: Music },
  { name: "Podcasts", Icon: Podcasts },
  { name: "News", Icon: News },
  { name: "Keynote", Icon: Keynote },
  { name: "Numbers", Icon: Numbers },
  { name: "App Store", Icon: AppStore, dot: "bg-[#7a0a05]" },
  { name: "Calendrier", Icon: Calendar },
  { name: "Réglages", Icon: Settings },
  { name: "Pages", Icon: Pages },
]

const recents = [
  { name: "PowerPoint", Icon: PowerPoint },
  { name: "Aperçu", Icon: Preview },
  { name: "HP Smart", Icon: HpSmart },
  { name: "Imprimante", Icon: Printer, dot: "bg-[#7a0a05]", badge: "1" },
]

const files = [
  { name: "Fenêtre App Store", Icon: MiniWindow },
  { name: "Corbeille", Icon: Trash },
]

const DockItem = ({ name, Icon, dot, badge }) => (
  <button type="button" aria-label={name} className="relative w-[70px] h-[70px] flex items-center justify-center">
    <Icon />
    {badge && (
      <span className="absolute -top-[9px] -right-[14px] w-[35px] h-[35px] rounded-full bg-[#ea5243] text-white text-[20px] leading-[35px] text-center shadow-[0_1px_3px_rgba(0,0,0,0.4)]">
        {badge}
      </span>
    )}
    {dot && <span className={`absolute -bottom-[25px] left-[31px] w-2 h-2 rounded-full ${dot}`}></span>}
  </button>
)

const Separator = () => <span className="w-[2px] h-[86px] mx-[7px] bg-[#b85a28]"></span>

const Dock = () => (
  <footer className="relative shrink-0 pt-[6px] pb-[10px] flex justify-center">
    <div className="h-[118px] px-4 pb-[10px] rounded-[36px] border-2 border-white/25 flex items-center gap-[26px] shadow-[0_0_6px_rgba(0,0,0,0.35)] bg-[linear-gradient(90deg,#6f93c8_0%,#6e9ad0_14%,#8d99b5_17%,#e29060_21%,#ee9f56_29%,#f08758_35%,#efa058_44%,#f0905b_52%,#f07c58_62%,#f27858_69%,#f09b58_80%,#f38f57_90%,#f38558_100%)]">
      {apps.map((a) => <DockItem key={a.name} {...a} />)}
      <Separator />
      {recents.map((a) => <DockItem key={a.name} {...a} />)}
      <Separator />
      {files.map((a) => <DockItem key={a.name} {...a} />)}
    </div>
  </footer>
)

const App = () => (
  <div className="relative h-screen flex flex-col overflow-hidden font-['Inter',sans-serif]">
    <Wallpaper />
    <MenuBar />
    <Browser />
    <Dock />
  </div>
)

export default App
